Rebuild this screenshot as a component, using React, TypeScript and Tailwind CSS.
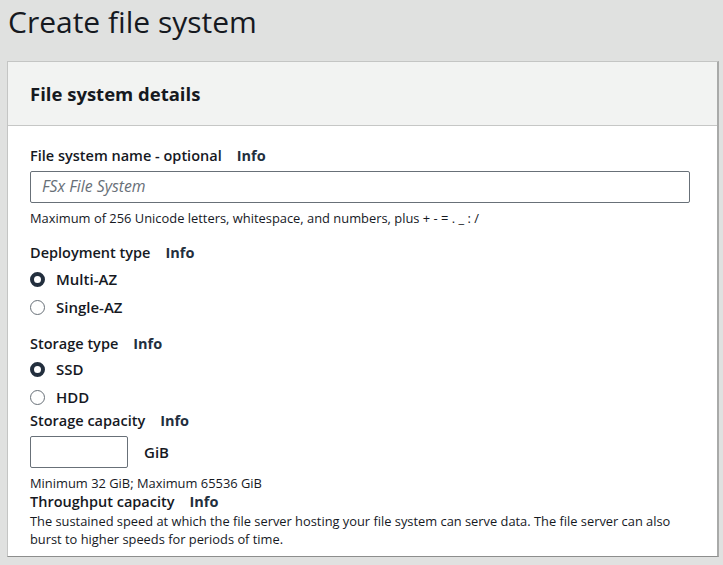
export default function App() {
  const font = { fontFamily: '"Open Sans", "Liberation Sans", sans-serif' };

  const Info = () => (
    <span className="ml-[15px] font-bold text-[#232f3e]">Info</span>
  );

  const Radio = ({ label, checked, className }: { label: string; checked?: boolean; className: string }) => (
    <div className={`flex items-center h-[20px] ${className}`}>
      <span
        className={
          checked
            ? "w-[15px] h-[15px] rounded-full border-[4px] border-[#232f3e] bg-white"
            : "w-[15px] h-[15px] rounded-full border border-[#687078] bg-white"
        }
      />
      <span className="ml-[11px] text-[15px] font-semibold text-[#16191f]">{label}</span>
    </div>
  );

  return (
    <div className="w-[723px] h-[565px] bg-[#e0e1e0] overflow-hidden text-[#16191f]" style={font}>
      <div className="h-[61px] pl-[8px] pt-[2px]">
        <h1 className="text-[30px] leading-[40px] text-[#16191f]">Create file system</h1>
      </div>

      <div className="ml-[7px] w-[712px] bg-white border border-[#c4c5c4] border-r-2 border-r-[#a9aaa9] border-b-[#8d8e8d]">
        <div className="h-[64px] bg-[#f2f3f2] border-b border-[#c6c7c6] flex items-center pl-[22px]">
          <h2 className="text-[18.5px] font-bold">File system details</h2>
        </div>

        <div className="pl-[22px] pb-[8px]">
          <div className="mt-[20px] h-[20px] leading-[20px] text-[14.5px] font-semibold">
            File system name - optional
            <Info />
          </div>
          <div className="mt-[5px] w-[660px] h-[32px] border border-[#687078] rounded-[2px] flex items-center pl-[11px]">
            <span className="text-[15.8px] italic text-[#687078]">FSx File System</span>
          </div>
          <div className="mt-[7px] h-[16px] leading-[16px] text-[12.9px]">
            Maximum of 256 Unicode letters, whitespace, and numbers, plus + - = . _ : /
          </div>

          <div className="mt-[17px] h-[20px] leading-[20px] text-[14.5px] font-semibold">
            Deployment type
            <Info />
          </div>
          <Radio label="Multi-AZ" checked className="mt-[6px]" />
          <Radio label="Single-AZ" className="mt-[8px]" />

          <div className="mt-[17px] h-[20px] leading-[20px] text-[14.5px] font-semibold">
            Storage type
            <Info />
          </div>
          <Radio label="SSD" checked className="mt-[5px]" />
          <Radio label="HDD" className="mt-[8px]" />

          <div className="mt-[4px] h-[20px] leading-[20px] text-[14.5px] font-semibold">
            Storage capacity
            <Info />
          </div>
          <div className="mt-[5px] flex items-center">
            <div className="w-[98px] h-[32px] border border-[#687078] rounded-[2px]" />
            <span className="ml-[16px] text-[15px] font-semibold">GiB</span>
          </div>
          <div className="mt-[7px] h-[16px] leading-[16px] text-[12.9px]">
            Minimum 32 GiB; Maximum 65536 GiB
          </div>

          <div className="mt-[1px] h-[20px] leading-[20px] text-[14.5px] font-semibold">
            Throughput capacity
            <Info />
          </div>
          <div className="w-[660px] text-[12.85px] leading-[18px]">
            The sustained speed at which the file server hosting your file system can serve data. The file server can also
            burst to higher speeds for periods of time.
          </div>
        </div>
      </div>
    </div>
  );
}
